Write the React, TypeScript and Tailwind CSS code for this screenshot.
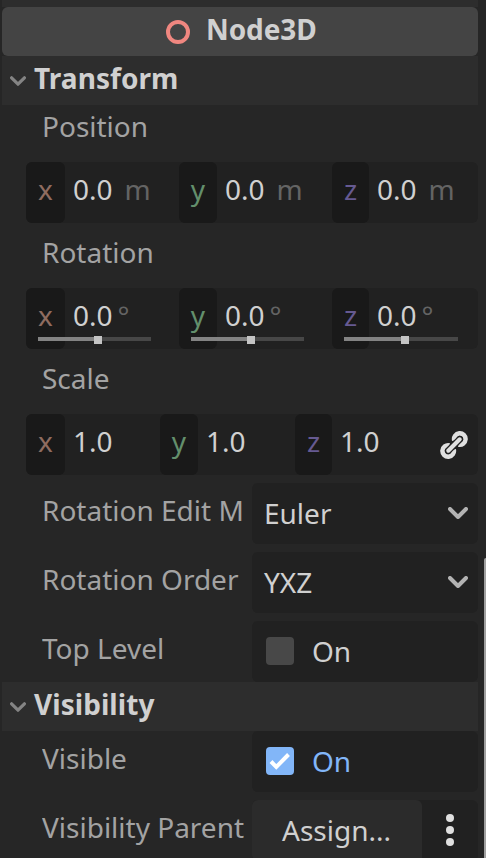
import React from "react";

const AXIS_COLORS = { x: "text-[#8f6c60]", y: "text-[#638f6c]", z: "text-[#665a91]" } as const;
type Axis = keyof typeof AXIS_COLORS;

function AxisLabel({ axis, width }: { axis: Axis; width: string }) {
  return (
    <span className={`h-full rounded-[6px] bg-[#191919] text-center leading-[54px] ${width} ${AXIS_COLORS[axis]}`}>
      {axis}
    </span>
  );
}

function Chevron({ className }: { className: string }) {
  return (
    <svg viewBox="0 0 20 12" className={className} fill="none" stroke="currentColor" strokeWidth="4" strokeLinecap="round" strokeLinejoin="round">
      <path d="M2 2 10 10 18 2" />
    </svg>
  );
}

function SectionHeader({ title }: { title: string }) {
  return (
    <div className="ml-0.5 flex h-[49px] w-[476px] shrink-0 bg-[#2d2d2d]">
      <Chevron className="mt-[20px] ml-2 h-[10px] w-4 text-[#848484]" />
      <span className="ml-2 font-bold leading-[44px] tracking-[0.05px] text-[#d0d0d0]">{title}</span>
    </div>
  );
}

function Slider({ wide }: { wide: boolean }) {
  return (
    <div className={`absolute bottom-[5px] left-3 flex h-2 items-start ${wide ? "w-[114px]" : "w-[113px]"}`}>
      <div className={`mt-px h-1 bg-[#838383] ${wide ? "w-[57px]" : "w-14"}`} />
      <div className="h-2 w-2 bg-[#c4c4c4]" />
      <div className="mt-px h-1 flex-1 bg-[#474747]" />
    </div>
  );
}

function VectorRow({ unit, slider }: { unit: string; slider?: boolean }) {
  const cells: { axis: Axis; cell: string; label: string }[] = [
    { axis: "x", cell: "w-[153px]", label: "w-[39px]" },
    { axis: "y", cell: "w-[153px]", label: "w-[38px]" },
    { axis: "z", cell: "w-[146px]", label: "w-[37px]" },
  ];
  return (
    <div className="ml-[26px] flex h-[61px] w-[452px] shrink-0 rounded-[6px] bg-[#212121]">
      {cells.map(({ axis, cell, label }) => (
        <div key={axis} className={`relative flex h-full leading-[54px] ${cell}`}>
          <AxisLabel axis={axis} width={label} />
          <span className="ml-2 text-[#d0d0d0]">0.0</span>
          <span className={`text-[#646464] ${unit === "m" ? "ml-[12px]" : "ml-[5px]"}`}>{unit}</span>
          {slider && <Slider wide={axis === "z"} />}
        </div>
      ))}
    </div>
  );
}

function LinkIcon() {
  return (
    <svg viewBox="0 0 28 28" className="mt-[17px] h-7 w-7" fill="none" stroke="#e0e0e0">
      <path d="M14.3 9.5A5.7 5.7 0 1 1 18.5 13.6M13.7 18.5A5.7 5.7 0 1 1 9.5 14.4" strokeWidth="4.6" />
      <path d="M8.3 19.7 19.7 8.3" strokeWidth="6.8" strokeLinecap="round" stroke="#212121" />
      <path d="M8.3 19.7 19.7 8.3" strokeWidth="4.1" strokeLinecap="round" />
    </svg>
  );
}

function ScaleRow() {
  const cells: { axis: Axis; cell: string; label: string }[] = [
    { axis: "x", cell: "w-[134px]", label: "w-[39px]" },
    { axis: "y", cell: "w-[135px]", label: "w-[38px]" },
    { axis: "z", cell: "w-[145px]", label: "w-[37px]" },
  ];
  return (
    <div className="ml-[26px] flex h-[61px] w-[452px] shrink-0 rounded-[6px] bg-[#212121]">
      {cells.map(({ axis, cell, label }) => (
        <div key={axis} className={`flex h-full leading-[54px] ${cell}`}>
          <AxisLabel axis={axis} width={label} />
          <span className="ml-2 text-[#d0d0d0]">1.0</span>
        </div>
      ))}
      <LinkIcon />
    </div>
  );
}

function PropertyRow({ label, children }: { label: string; children: React.ReactNode }) {
  return (
    <div className="flex h-[61px] shrink-0">
      <div className="ml-[42px] w-[202px] shrink-0 overflow-hidden whitespace-nowrap leading-[54px]">{label}</div>
      <div className="ml-2 flex h-full w-[226px] shrink-0 overflow-hidden rounded-[6px] bg-[#212121] leading-[60px] text-[#d0d0d0]">
        {children}
      </div>
    </div>
  );
}

function Dropdown({ value }: { value: string }) {
  return (
    <div className="flex w-full justify-between pr-[10px] pl-3">
      <span>{value}</span>
      <Chevron className="mt-6 h-3 w-5 text-[#b3b3b3]" />
    </div>
  );
}

function Toggle({ checked }: { checked?: boolean }) {
  return (
    <div className={`flex pl-[14px] ${checked ? "text-[#82b6f8]" : ""}`}>
      <span className={`mt-4 mr-[18px] h-7 w-7 rounded-[4px] ${checked ? "bg-[#82b6f8]" : "bg-[#484848]"}`}>
        {checked && (
          <svg viewBox="0 0 28 28" className="h-7 w-7" fill="none" stroke="#fff" strokeWidth="4">
            <path d="M5 14.5 10.3 20 22.5 7.5" />
          </svg>
        )}
      </span>
      <span>On</span>
    </div>
  );
}

export default function App() {
  return (
    <div className="relative flex h-[858px] w-[486px] flex-col overflow-hidden bg-[#262626] font-['Noto_Sans',sans-serif] text-[28px] text-[#a3a3a3]">
      <div className="ml-0.5 h-[7px] w-[476px] shrink-0 bg-[#2d2d2d]" />
      <div className="ml-0.5 flex h-[49px] w-[476px] shrink-0 rounded-[6px] bg-[#444444]">
        <span className="mt-[13px] ml-[164px] h-6 w-6 rounded-full border-4 border-[#f08780]" />
        <span className="ml-4 font-bold leading-[44px] tracking-[-0.1px] text-[#d0d0d0]">Node3D</span>
      </div>
      <SectionHeader title="Transform" />
      <div className="h-[57px] shrink-0 pl-[42px] leading-[42px]">Position</div>
      <VectorRow unit="m" />
      <div className="h-[65px] shrink-0 pl-[42px] leading-[58px]">Rotation</div>
      <VectorRow unit="°" slider />
      <div className="h-[65px] shrink-0 pl-[42px] leading-[58px]">Scale</div>
      <ScaleRow />
      <div className="mt-2 flex flex-col gap-2">
        <PropertyRow label="Rotation Edit M"><Dropdown value="Euler" /></PropertyRow>
        <PropertyRow label="Rotation Order"><Dropdown value="YXZ" /></PropertyRow>
        <PropertyRow label="Top Level"><Toggle /></PropertyRow>
      </div>
      <SectionHeader title="Visibility" />
      <div className="flex flex-col gap-2">
        <PropertyRow label="Visible"><Toggle checked /></PropertyRow>
        <PropertyRow label="Visibility Parent">
          <span className="w-[170px] rounded-tr-[6px] bg-[#2b2b2b] pl-[30px]">Assign...</span>
          <span className="mt-[14px] ml-6 flex flex-col gap-1">
            <i className="h-2 w-2 rounded-full bg-[#e0e0e0]" />
            <i className="h-2 w-2 rounded-full bg-[#e0e0e0]" />
            <i className="h-2 w-2 rounded-full bg-[#e0e0e0]" />
          </span>
        </PropertyRow>
      </div>
      <div className="absolute top-[558px] right-0 h-[300px] w-[2px] rounded-tl-[2px] bg-[#a0a0a0]" />
    </div>
  );
}
